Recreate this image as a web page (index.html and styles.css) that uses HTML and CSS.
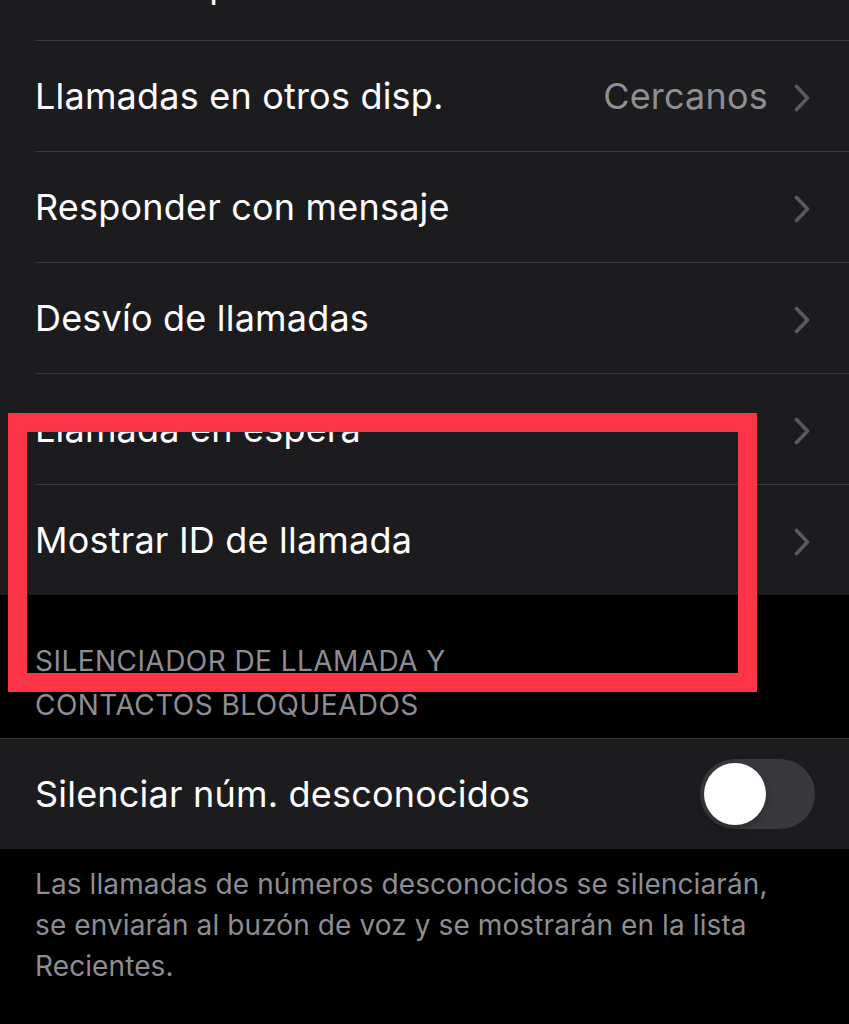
FILE: index.html
```html
<!DOCTYPE html>
<html lang="es">
<head>
<meta charset="utf-8">
<title>Teléfono</title>
<link rel="stylesheet" href="styles.css">
</head>
<body>
<div class="screen">
  <div class="group group-first">
    <div class="row">
      <div class="row-body">
        <span class="label">Llamadas por Wi‑Fi</span>
        <svg class="chev chev-hidden" viewBox="0 0 16 28" width="16" height="28"><path d="M2.5 2.5 L13.5 14 L2.5 25.5" /></svg>
      </div>
    </div>
    <div class="row">
      <div class="row-body">
        <span class="label">Llamadas en otros disp.</span>
        <span class="value">Cercanos</span>
        <svg class="chev" viewBox="0 0 16 28" width="16" height="28"><path d="M2.5 2.5 L13.5 14 L2.5 25.5" /></svg>
      </div>
    </div>
    <div class="row">
      <div class="row-body">
        <span class="label">Responder con mensaje</span>
        <svg class="chev" viewBox="0 0 16 28" width="16" height="28"><path d="M2.5 2.5 L13.5 14 L2.5 25.5" /></svg>
      </div>
    </div>
    <div class="row">
      <div class="row-body">
        <span class="label">Desvío de llamadas</span>
        <svg class="chev" viewBox="0 0 16 28" width="16" height="28"><path d="M2.5 2.5 L13.5 14 L2.5 25.5" /></svg>
      </div>
    </div>
    <div class="row">
      <div class="row-body">
        <span class="label">Llamada en espera</span>
        <svg class="chev" viewBox="0 0 16 28" width="16" height="28"><path d="M2.5 2.5 L13.5 14 L2.5 25.5" /></svg>
      </div>
    </div>
    <div class="row">
      <div class="row-body">
        <span class="label">Mostrar ID de llamada</span>
        <svg class="chev" viewBox="0 0 16 28" width="16" height="28"><path d="M2.5 2.5 L13.5 14 L2.5 25.5" /></svg>
      </div>
    </div>
  </div>

  <div class="section-header">SILENCIADOR DE LLAMADA Y<br>CONTACTOS BLOQUEADOS</div>

  <div class="group group-bordered">
    <div class="row">
      <div class="row-body row-toggle">
        <span class="label">Silenciar núm. desconocidos</span>
        <span class="switch"><span class="knob"></span></span>
      </div>
    </div>
  </div>

  <div class="section-footer">Las llamadas de números desconocidos se silenciarán,<br>se enviarán al buzón de voz y se mostrarán en la lista<br>Recientes.</div>

  <div class="highlight"></div>
</div>
</body>
</html>
```

FILE: styles.css
```css
html, body {
  margin: 0;
  padding: 0;
  background: #000;
}

.screen {
  position: relative;
  width: 849px;
  height: 1024px;
  overflow: hidden;
  background: #000;
  font-family: "Inter", "Liberation Sans", sans-serif;
  color: #fff;
}

.group {
  background: #1c1c1e;
}

.group-first {
  margin-top: -70px;
}

.group-bordered {
  border-top: 1px solid #38383a;
}

.row {
  padding-left: 35px;
}

.row-body {
  display: flex;
  align-items: center;
  height: 110px;
  padding-right: 39px;
  border-bottom: 1px solid #38383a;
}

.row:last-child .row-body {
  border-bottom: none;
}

.label {
  flex: 1;
  font-size: 36px;
  letter-spacing: 0.2px;
  white-space: nowrap;
}

.value {
  font-size: 36px;
  letter-spacing: 0.2px;
  color: #8e8e93;
  margin-right: 26px;
}

.chev {
  display: block;
  margin-top: 4px;
}

.chev-hidden {
  margin-top: 0;
  margin-bottom: 8px;
}

.chev path {
  fill: none;
  stroke: #5a5a5e;
  stroke-width: 3.6;
  stroke-linecap: round;
  stroke-linejoin: round;
}

.row-toggle {
  padding-right: 34px;
}

.switch {
  position: relative;
  display: block;
  width: 115px;
  height: 70px;
  border-radius: 35px;
  background: #39393d;
}

.knob {
  position: absolute;
  left: 4px;
  top: 4px;
  width: 62px;
  height: 62px;
  border-radius: 50%;
  background: #fff;
  box-shadow: 0 3px 8px rgba(0, 0, 0, 0.25);
}

.section-header {
  padding: 44px 35px 11px;
  font-size: 28px;
  line-height: 44px;
  color: #8d8d93;
  letter-spacing: 0.45px;
}

.section-footer {
  padding: 15px 35px 0;
  font-size: 28px;
  line-height: 41px;
  color: #8d8d93;
  letter-spacing: 0.1px;
}

.highlight {
  position: absolute;
  left: 8px;
  top: 413px;
  width: 749px;
  height: 279px;
  box-sizing: border-box;
  border: 19px solid #fc3447;
}
```
